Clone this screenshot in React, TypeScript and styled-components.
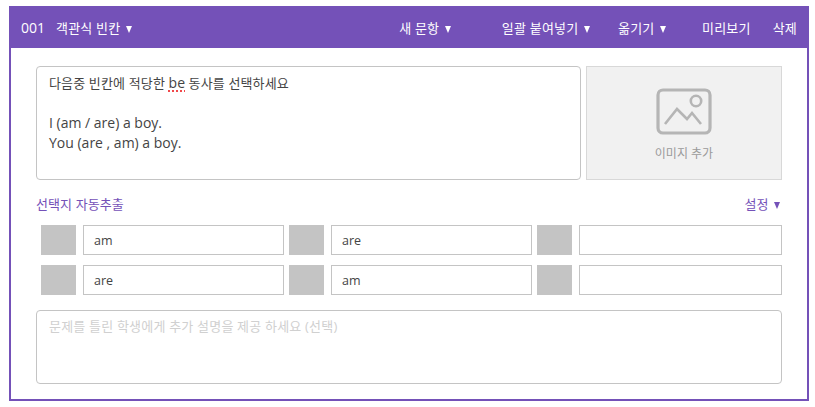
import React from 'react'
import styled, { createGlobalStyle } from 'styled-components'

const PURPLE = '#7451b8'

const GlobalStyle = createGlobalStyle`
  html, body {
    margin: 0;
    padding: 0;
    background: #fff;
  }
  body {
    font-family: 'Open Sans', 'Noto Sans CJK KR', sans-serif;
    font-size: 13px;
    color: #444;
  }
  * {
    box-sizing: border-box;
  }
`

const choices = [
  ['am', 'are', ''],
  ['are', 'am', ''],
]

const ImageIcon = () => (
  <svg width="56" height="47" viewBox="0 0 56 47" fill="none" stroke="#b5b5b5" strokeWidth="3.2">
    <rect x="2" y="2" width="52" height="43" rx="5" />
    <circle cx="40" cy="13" r="5.2" strokeWidth="2.6" />
    <path d="M9 36 L21 21 L31 31 L36 25 L45 36" strokeWidth="2.6" />
  </svg>
)

const App = () => {
  return (
    <>
      <GlobalStyle />
      <Page>
        <Card>
          <Header>
            <HeaderLeft>
              <Number>001</Number>
              <MenuItem>
                객관식 빈칸 <Caret />
              </MenuItem>
            </HeaderLeft>
            <HeaderRight>
              <MenuItem>
                새 문항 <Caret />
              </MenuItem>
              <MenuItem $left={50}>
                일괄 붙여넣기 <Caret />
              </MenuItem>
              <MenuItem $left={27}>
                옮기기 <Caret />
              </MenuItem>
              <MenuItem $left={35}>미리보기</MenuItem>
              <MenuItem $left={22}>삭제</MenuItem>
            </HeaderRight>
          </Header>
          <Body>
            <TopRow>
              <QuestionBox>
                <Instruction>
                  다음중 빈칸에 적당한 <Misspelled>be</Misspelled> 동사를 선택하세요
                </Instruction>
                <br />
                <Sentence>I (am / are) a boy.</Sentence>
                <Sentence>You (are , am) a boy.</Sentence>
              </QuestionBox>
              <ImageBox>
                <ImageIcon />
                <ImageLabel>이미지 추가</ImageLabel>
              </ImageBox>
            </TopRow>
            <OptionsBar>
              <span>선택지 자동추출</span>
              <SettingsToggle>
                설정 <Caret $purple />
              </SettingsToggle>
            </OptionsBar>
            <ChoiceGrid>
              {choices.flat().map((value, i) => (
                <Choice key={i}>
                  <Swatch />
                  <ChoiceInput defaultValue={value} />
                </Choice>
              ))}
            </ChoiceGrid>
            <Explanation placeholder="문제를 틀린 학생에게 추가 설명을 제공 하세요 (선택)" />
          </Body>
        </Card>
      </Page>
    </>
  )
}

export default App

const Page = styled.div`
  padding: 6px 6px 6px 9px;
`
const Card = styled.div`
  width: 800px;
  height: 395px;
  border: 2px solid ${PURPLE};
  border-top: 0;
  background: #fff;
`
const Header = styled.div`
  height: 42px;
  margin: 0 -2px;
  padding: 0 12px;
  display: flex;
  align-items: center;
  justify-content: space-between;
  background: ${PURPLE};
  color: #fff;
`
const HeaderLeft = styled.div`
  display: flex;
  align-items: center;
`
const HeaderRight = styled.div`
  display: flex;
  align-items: center;
`
const Number = styled.span`
  margin-right: 11px;
  font-size: 14px;
`
const MenuItem = styled.span<{ $left?: number }>`
  margin-left: ${(p) => p.$left ?? 0}px;
  white-space: nowrap;
  letter-spacing: 0.2px;
`
const Caret = styled.i<{ $purple?: boolean }>`
  display: inline-block;
  margin-left: 2px;
  margin-right: 1px;
  vertical-align: 0;
  border-left: 3.5px solid transparent;
  border-right: 3.5px solid transparent;
  border-top: 7px solid ${(p) => (p.$purple ? PURPLE : '#fff')};
`
const Body = styled.div`
  padding: 18px 25px 0;
`
const TopRow = styled.div`
  display: flex;
  gap: 5px;
`
const QuestionBox = styled.div`
  width: 545px;
  height: 114px;
  padding: 6px 12px;
  border: 1px solid #c4c4c4;
  border-radius: 4px;
  line-height: 20px;
`
const Instruction = styled.div`
  letter-spacing: 0.15px;
`
const Sentence = styled.div`
  font-size: 14px;
`
const Misspelled = styled.span`
  font-size: 14px;
  letter-spacing: 0;
  text-decoration: underline dotted #f0484a 2px;
  text-underline-offset: 2px;
`
const ImageBox = styled.div`
  flex: 1;
  height: 114px;
  padding-top: 21px;
  display: flex;
  flex-direction: column;
  align-items: center;
  background: #f1f1f1;
  border: 1px solid #d8d8d8;
`
const ImageLabel = styled.div`
  margin-top: 9px;
  font-size: 12px;
  color: #9a9a9a;
`
const OptionsBar = styled.div`
  height: 45px;
  padding-top: 2px;
  display: flex;
  align-items: center;
  justify-content: space-between;
  color: ${PURPLE};
  letter-spacing: 0.1px;
`
const SettingsToggle = styled.span`
  margin-right: 1px;
`
const ChoiceGrid = styled.div`
  margin-left: 5px;
  display: grid;
  grid-template-columns: 243px 243px 245px;
  column-gap: 5px;
  row-gap: 10px;
`
const Choice = styled.div`
  display: flex;
  gap: 7px;
`
const Swatch = styled.div`
  flex: none;
  width: 35px;
  height: 30px;
  background: #c4c4c4;
`
const ChoiceInput = styled.input`
  flex: 1;
  min-width: 0;
  height: 30px;
  padding: 0 10px;
  border: 1px solid #c4c4c4;
  border-radius: 0;
  outline: none;
  font: inherit;
  font-size: 12.5px;
  color: #444;
`
const Explanation = styled.textarea`
  display: block;
  width: 100%;
  height: 74px;
  margin-top: 15px;
  padding: 5px 12px;
  border: 1px solid #c4c4c4;
  border-radius: 4px;
  outline: none;
  resize: none;
  font: inherit;
  letter-spacing: 0.2px;

  &::placeholder {
    color: #d0d0d0;
  }
`
